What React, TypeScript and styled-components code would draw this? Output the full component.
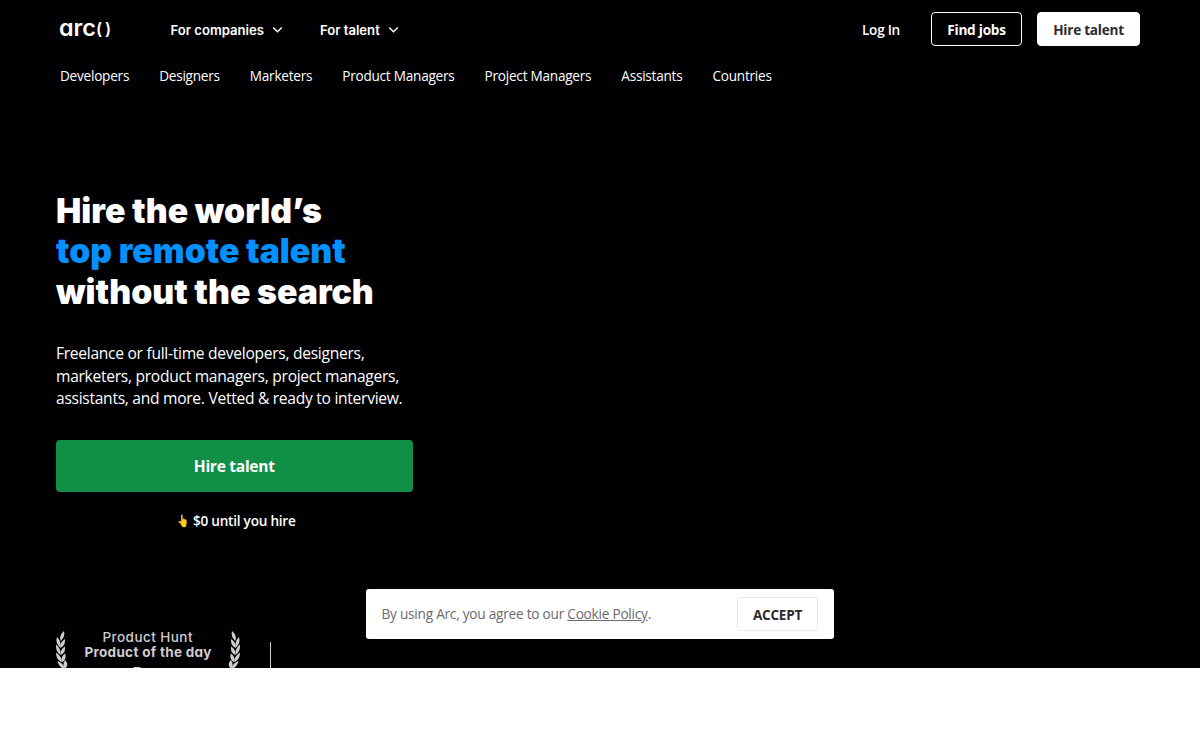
import React from "react";
import styled, { createGlobalStyle } from "styled-components";

const GlobalStyle = createGlobalStyle`
  *, *::before, *::after { box-sizing: border-box; }
  html { font-size: 15px; }
  body { margin: 0; background: #fff; font-family: "Open Sans", sans-serif; overflow: hidden; }
  h1, p { margin: 0; }
  a { color: inherit; text-decoration: none; }
  button { font-family: inherit; cursor: pointer; }
`;

const Hero = styled.div`
  height: 668px;
  overflow: hidden;
  background: #010002;
  color: #fff;
`;

const TopBar = styled.header`
  display: flex;
  align-items: center;
  height: 58px;
  padding: 0 60px;
`;

const Logo = styled.svg`
  display: block;
  width: 52px;
  height: 24px;
  margin-right: 58.5px;
  overflow: visible;
`;

const LogoText = styled.text<{ $size: number; $weight: number }>`
  font-family: Inter, sans-serif;
  font-weight: ${(p) => p.$weight};
  font-size: ${(p) => p.$size}px;
  font-feature-settings: "cv11" 1;
  fill: #fff;
`;

const MainNav = styled.nav`
  display: flex;
  gap: 37px;
  flex: 1;
`;

const MenuLink = styled.a`
  display: flex;
  align-items: center;
  gap: 8px;
  padding-top: 1px;
  font: 600 0.875rem/20px Inter, sans-serif;
`;

const Chevron = styled.svg`
  display: block;
  width: 11px;
  height: 8px;
  fill: none;
  stroke: #fff;
  stroke-width: 1.4;
`;

const Actions = styled.div`
  display: flex;
  align-items: center;
  gap: 15px;
`;

const LogIn = styled.a`
  margin-right: 16px;
  padding-top: 1px;
  font-size: 13.6px;
  font-weight: 600;
  line-height: 19px;
  letter-spacing: -0.25px;
`;

const HeaderButton = styled.button<{ $filled?: boolean; $width: number }>`
  width: ${(p) => p.$width}px;
  height: 34px;
  padding: 1px 0 0;
  border: 1px solid #fff;
  border-radius: 4px;
  background: ${(p) => (p.$filled ? "#fff" : "transparent")};
  color: ${(p) => (p.$filled ? "#2b2b33" : "#fff")};
  font-size: 13.6px;
  font-weight: 700;
  line-height: 19px;
  letter-spacing: -0.25px;
`;

const CategoryNav = styled.nav`
  display: flex;
  gap: 30px;
  padding: 8px 60px 0;
  font-size: 13.6px;
  letter-spacing: -0.24px;
  line-height: 20px;
`;

const Intro = styled.main`
  display: flex;
  flex-direction: column;
  width: 356.5px;
  margin: 104.5px 0 0 56px;
`;

const Headline = styled.h1`
  font: 900 2.25rem/1.2 Inter, sans-serif;
  white-space: nowrap;
`;

const Accent = styled.span`
  color: #0590ff;
`;

const Lead = styled.p`
  margin-top: 30px;
  font-size: 15.6px;
  letter-spacing: -0.285px;
  line-height: 22.5px;
  white-space: nowrap;
`;

const HireButton = styled.button`
  height: 52px;
  margin-top: 30px;
  border: 0;
  border-radius: 4px;
  background: #118f46;
  color: #fff;
  font-size: 15.6px;
  font-weight: 700;
  letter-spacing: -0.3px;
`;

const Note = styled.p`
  display: flex;
  justify-content: center;
  gap: 4px;
  margin-top: 19px;
  padding-left: 4px;
  font-size: 13.6px;
  font-weight: 600;
  letter-spacing: -0.24px;
  line-height: 20px;
`;

const Hand = styled.span`
  display: flex;
  justify-content: center;
  width: 12px;
  font-size: 12px;
  transform: scaleX(0.8);
`;

const Awards = styled.section`
  display: flex;
  margin: 100px 0 0 56px;
`;

const AwardBadge = styled.div`
  display: flex;
  justify-content: space-between;
  width: 184px;
`;

const LaurelArt = styled.svg<{ $flip?: boolean }>`
  display: block;
  flex: none;
  width: 14px;
  height: 44px;
  fill: #cfcdd0;
  transform: ${(p) => (p.$flip ? "scaleX(-1)" : "none")};
`;

const AwardCopy = styled.svg`
  display: block;
  flex: none;
  width: 130px;
  height: 44px;
  overflow: visible;
`;

const AwardText = styled.text<{ $weight: number }>`
  font-family: Inter, sans-serif;
  font-size: 13.5px;
  font-weight: ${(p) => p.$weight};
  font-feature-settings: "cv11" 1;
  fill: #cfcdd0;
  text-anchor: middle;
`;

const Divider = styled.div`
  width: 1px;
  height: 50px;
  margin: 11px 0 0 30px;
  background: #cfcdd0;
`;

const CookieBar = styled.aside`
  position: fixed;
  top: 589px;
  left: 366px;
  display: flex;
  align-items: center;
  justify-content: space-between;
  width: 468px;
  height: 50px;
  padding: 0 16px 0 15.5px;
  border-radius: 3px;
  background: #fff;
  color: #6a6970;
  font-size: 13.6px;
  letter-spacing: -0.22px;
  line-height: 19px;
`;

const CookieCopy = styled.span`
  padding-bottom: 1px;
`;

const PolicyLink = styled.a`
  text-decoration: underline;
`;

const AcceptButton = styled.button`
  width: 81px;
  height: 34px;
  padding: 1px 0 0;
  border: 1px solid #ebe9ed;
  border-radius: 3px;
  background: #fff;
  color: #2b2b33;
  font-size: 13.6px;
  font-weight: 700;
  line-height: 19px;
  letter-spacing: -0.25px;
`;

const categories = [
  "Developers",
  "Designers",
  "Marketers",
  "Product Managers",
  "Project Managers",
  "Assistants",
  "Countries",
];

function Laurel({ flip }: { flip?: boolean }) {
  return (
    <LaurelArt viewBox="0 0 14 44" $flip={flip}>
      <path d="M8 0C4.5 3 3.5 6 4.6 10C7.8 7 9 4 8 0Z" />
      <path d="M1 6C-.2 10 .8 13.5 3.8 16C5 12 4 9 1 6Z" />
      <path d="M9 8C5 10.5 3.6 13.5 4 17C8 15.5 9.4 12 9 8Z" />
      <path d="M0 13.5C-.3 18 .8 21.5 4.6 24C5.2 19.5 3 16 0 13.5Z" />
      <path d="M9 15.5C5.5 17.5 4 20.5 4.8 24C8.2 22.5 9.6 19.5 9 15.5Z" />
      <path d="M0 21.5C0 26 1.8 29.5 5.8 31.2C6 27 3.5 24 0 21.5Z" />
      <path d="M9.2 22.5C6 24.5 4.8 28 6 31.2C9.2 29.5 10.3 26.5 9.2 22.5Z" />
      <path d="M1.5 30C2.5 34.5 4.800 37 8.8 38C8.2 34 5.5 31.5 1.5 30Z" />
      <path d="M9 29C7 32 7 34.5 9 38C12 35 12 32 9 29Z" />
      <path d="M4 37C6 40 9 41 13 42C10 38 8 37 4 37Z" />
    </LaurelArt>
  );
}

function Menu({ label }: { label: string }) {
  return (
    <MenuLink href="#">
      {label}
      <Chevron viewBox="0 0 11 8">
        <path d="M1.2 1.5L5.5 5.8L9.8 1.5" />
      </Chevron>
    </MenuLink>
  );
}

export default function App() {
  return (
    <>
      <GlobalStyle />
      <Hero>
        <TopBar>
          <Logo viewBox="0 0 52 24">
            <LogoText $size={22.5} $weight={600} x="-1" y="19" textLength="37" lengthAdjust="spacingAndGlyphs">arc</LogoText>
            <LogoText $size={16.5} $weight={600} x="36 45" y="18">()</LogoText>
          </Logo>
          <MainNav>
            <Menu label="For companies" />
            <Menu label="For talent" />
          </MainNav>
          <Actions>
            <LogIn href="#">Log In</LogIn>
            <HeaderButton $width={91}>Find jobs</HeaderButton>
            <HeaderButton $width={103} $filled>Hire talent</HeaderButton>
          </Actions>
        </TopBar>
        <CategoryNav>
          {categories.map((name) => (
            <a href="#" key={name}>{name}</a>
          ))}
        </CategoryNav>
        <Intro>
          <Headline>
            Hire the world’s
            <br />
            <Accent>top remote talent</Accent>
            <br />
            without the search
          </Headline>
          <Lead>
            Freelance or full-time developers, designers,
            <br />
            marketers, product managers, project managers,
            <br />
            assistants, and more. Vetted &amp; ready to interview.
          </Lead>
          <HireButton>Hire talent</HireButton>
          <Note>
            <Hand>👆</Hand>
            $0 until you hire
          </Note>
        </Intro>
        <Awards>
          <AwardBadge>
            <Laurel />
            <AwardCopy viewBox="0 0 130 44">
              <AwardText x="64.5" y="11" $weight={500} textLength="90">Product Hunt</AwardText>
              <AwardText x="65" y="26" $weight={700} textLength="127">Product of the day</AwardText>
              <rect x="50.5" y="36" width="7" height="2" fill="#cfcdd0" />
            </AwardCopy>
            <Laurel flip />
          </AwardBadge>
          <Divider />
        </Awards>
      </Hero>
      <CookieBar>
        <CookieCopy>
          By using Arc, you agree to our <PolicyLink href="#">Cookie Policy</PolicyLink>.
        </CookieCopy>
        <AcceptButton>ACCEPT</AcceptButton>
      </CookieBar>
    </>
  );
}
